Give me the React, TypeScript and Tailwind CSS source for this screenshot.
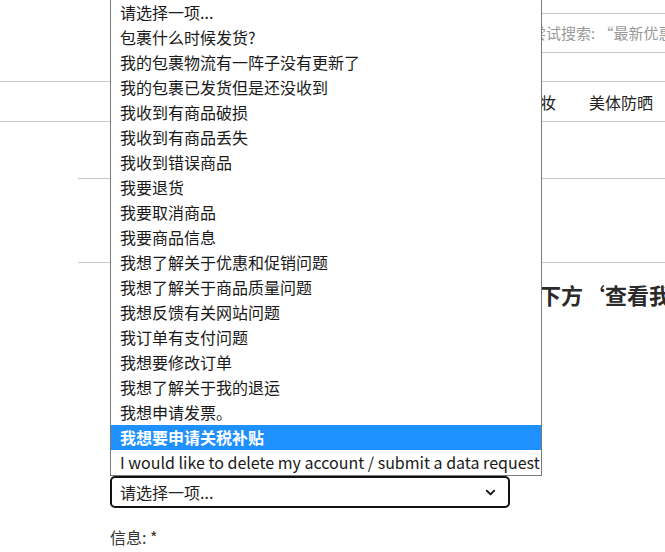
import { ChevronDown } from "lucide-react";

const options = [
  "请选择一项...",
  "包裹什么时候发货?",
  "我的包裹物流有一阵子没有更新了",
  "我的包裹已发货但是还没收到",
  "我收到有商品破损",
  "我收到有商品丢失",
  "我收到错误商品",
  "我要退货",
  "我要取消商品",
  "我要商品信息",
  "我想了解关于优惠和促销问题",
  "我想了解关于商品质量问题",
  "我想反馈有关网站问题",
  "我订单有支付问题",
  "我想要修改订单",
  "我想了解关于我的退运",
  "我想申请发票。",
  "我想要申请关税补贴",
  "I would like to delete my account / submit a data request",
];

const navItems = ["新品", "品牌", "护肤", "彩妆", "美体防晒", "个人护理"];

export default function App() {
  const selected = 17;

  return (
    <div className="relative h-[552px] w-full overflow-hidden bg-white font-['Noto_Sans_CJK_SC','Noto_Sans',sans-serif] text-[#222]">
      {/* Search */}
      <div className="flex h-[81px] pt-[13px] pl-[380px]">
        <div className="flex h-[40px] w-[400px] shrink-0 items-center border border-[#c8c8c8] pl-[150px] text-[15px] whitespace-nowrap text-[#9a9a9a]">
          尝试搜索: “最新优惠”
        </div>
      </div>

      {/* Nav */}
      <div className="flex h-[41px] items-center gap-[33px] border-y border-[#c8c8c8] pl-[329px] text-[16px] whitespace-nowrap text-[#222]">
        {navItems.map((n) => (
          <span key={n}>{n}</span>
        ))}
      </div>

      {/* Content */}
      <div className="ml-[78px] mt-[56px] h-[85px] border-y border-[#c8c8c8]" />
      <h2 className="mt-[15px] pl-[473px] text-[22px] leading-[32px] font-bold whitespace-nowrap text-[#2b2b2b]">
        请点击下方‘查看我的订单’
      </h2>

      <div className="ml-[110px] mt-[166px] flex h-[32px] w-[400px] items-center justify-between rounded-[5px] border-2 border-[#111] pl-[8px] pr-[10px] text-[16px] text-[#222]">
        <span>请选择一项...</span>
        <ChevronDown size={15} strokeWidth={3} className="text-[#111]" />
      </div>

      <div className="ml-[110px] mt-[17px] text-[16px] leading-[24px] text-[#333]">信息: *</div>

      {/* Open dropdown list */}
      <div className="absolute left-[110px] top-[-1px] w-[432px] border border-[#7a7a7a] bg-white">
        {options.map((o, i) => (
          <div
            key={o}
            className={
              i === selected
                ? "h-[25px] bg-[#1e90ff] pl-[9px] text-[16px] leading-[25px] font-bold whitespace-nowrap text-white"
                : "h-[25px] pl-[9px] text-[16px] leading-[25px] whitespace-nowrap text-[#1a1a1a]"
            }
          >
            {o}
          </div>
        ))}
      </div>
    </div>
  );
}
